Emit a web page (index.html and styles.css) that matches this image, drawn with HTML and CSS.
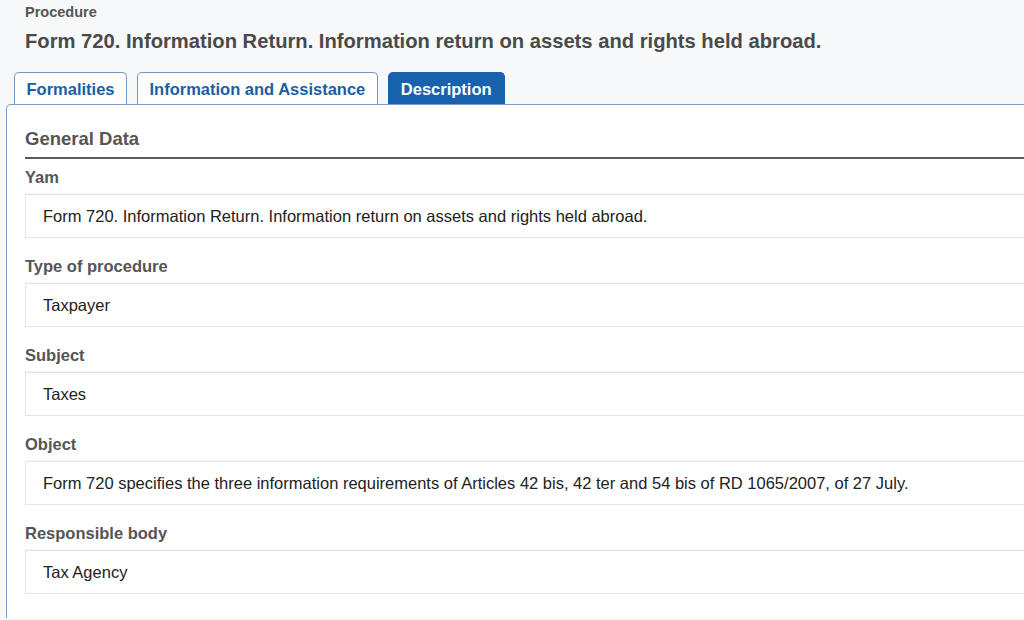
FILE: index.html
```html
<!DOCTYPE html>
<html>
<head>
    <link rel="stylesheet" href="styles.css">
</head>
<body>
    <div class="page">
        <div class="eyebrow">Procedure</div>
        <h1 class="title">Form 720. Information Return. Information return on assets and rights held abroad.</h1>

        <div class="tabs">
            <div class="tab">Formalities</div>
            <div class="tab">Information and Assistance</div>
            <div class="tab active">Description</div>
        </div>

        <div class="panel">
            <h2 class="section">General Data</h2>

            <div class="field">
                <div class="label">Yam</div>
                <div class="value">Form 720. Information Return. Information return on assets and rights held abroad.</div>
            </div>
            <div class="field">
                <div class="label">Type of procedure</div>
                <div class="value">Taxpayer</div>
            </div>
            <div class="field">
                <div class="label">Subject</div>
                <div class="value">Taxes</div>
            </div>
            <div class="field">
                <div class="label">Object</div>
                <div class="value">Form 720 specifies the three information requirements of Articles 42 bis, 42 ter and 54 bis of RD 1065/2007, of 27 July.</div>
            </div>
            <div class="field">
                <div class="label">Responsible body</div>
                <div class="value">Tax Agency</div>
            </div>
        </div>
    </div>
</body>
</html>
```

FILE: styles.css
```css
html, body {
    margin: 0;
    padding: 0;
    background: #f7f8f9;
    overflow: hidden;
}

body {
    font-family: "Liberation Sans", Arial, sans-serif;
    color: #222;
}

.page {
    padding-left: 6px;
    width: 1060px;
}

.eyebrow {
    margin: 0 0 0 19px;
    padding-top: 4px;
    font-size: 14.5px;
    font-weight: bold;
    color: #555;
    line-height: 16px;
}

.title {
    margin: 9px 0 0 19px;
    font-size: 20.2px;
    line-height: 24px;
    font-weight: bold;
    color: #4a4a4a;
}

.tabs {
    display: flex;
    gap: 10px;
    margin: 19px 0 0 8px;
}

.tab {
    height: 31px;
    line-height: 32px;
    padding: 0 11.5px;
    border: 1px solid #7098c4;
    border-bottom: none;
    border-radius: 5px 5px 0 0;
    background: #fff;
    color: #1b5ea6;
    font-size: 16.5px;
    font-weight: bold;
}

.tab.active {
    padding: 0 12px;
    background: #1862ad;
    border-color: #1862ad;
    color: #fff;
}

.panel {
    background: #fff;
    border: 1px solid #7a9cc6;
    border-bottom: none;
    border-radius: 5px 0 0 0;
    padding: 22px 0 24px 18px;
}

.section {
    margin: 0;
    padding-bottom: 6px;
    font-size: 18.5px;
    line-height: 24px;
    color: #555;
    border-bottom: 2px solid #5a5a5a;
}

.label {
    padding: 9px 0 7px;
    font-size: 16.5px;
    line-height: 18px;
    font-weight: bold;
    color: #555;
    border-bottom: 1px solid #f4f4f4;
}

.field + .field .label {
    padding-top: 19px;
}

.value {
    height: 42px;
    line-height: 42px;
    padding-left: 17px;
    border: 1px solid #e4e4e4;
    border-right: none;
    font-size: 16.5px;
    color: #222;
}
```
